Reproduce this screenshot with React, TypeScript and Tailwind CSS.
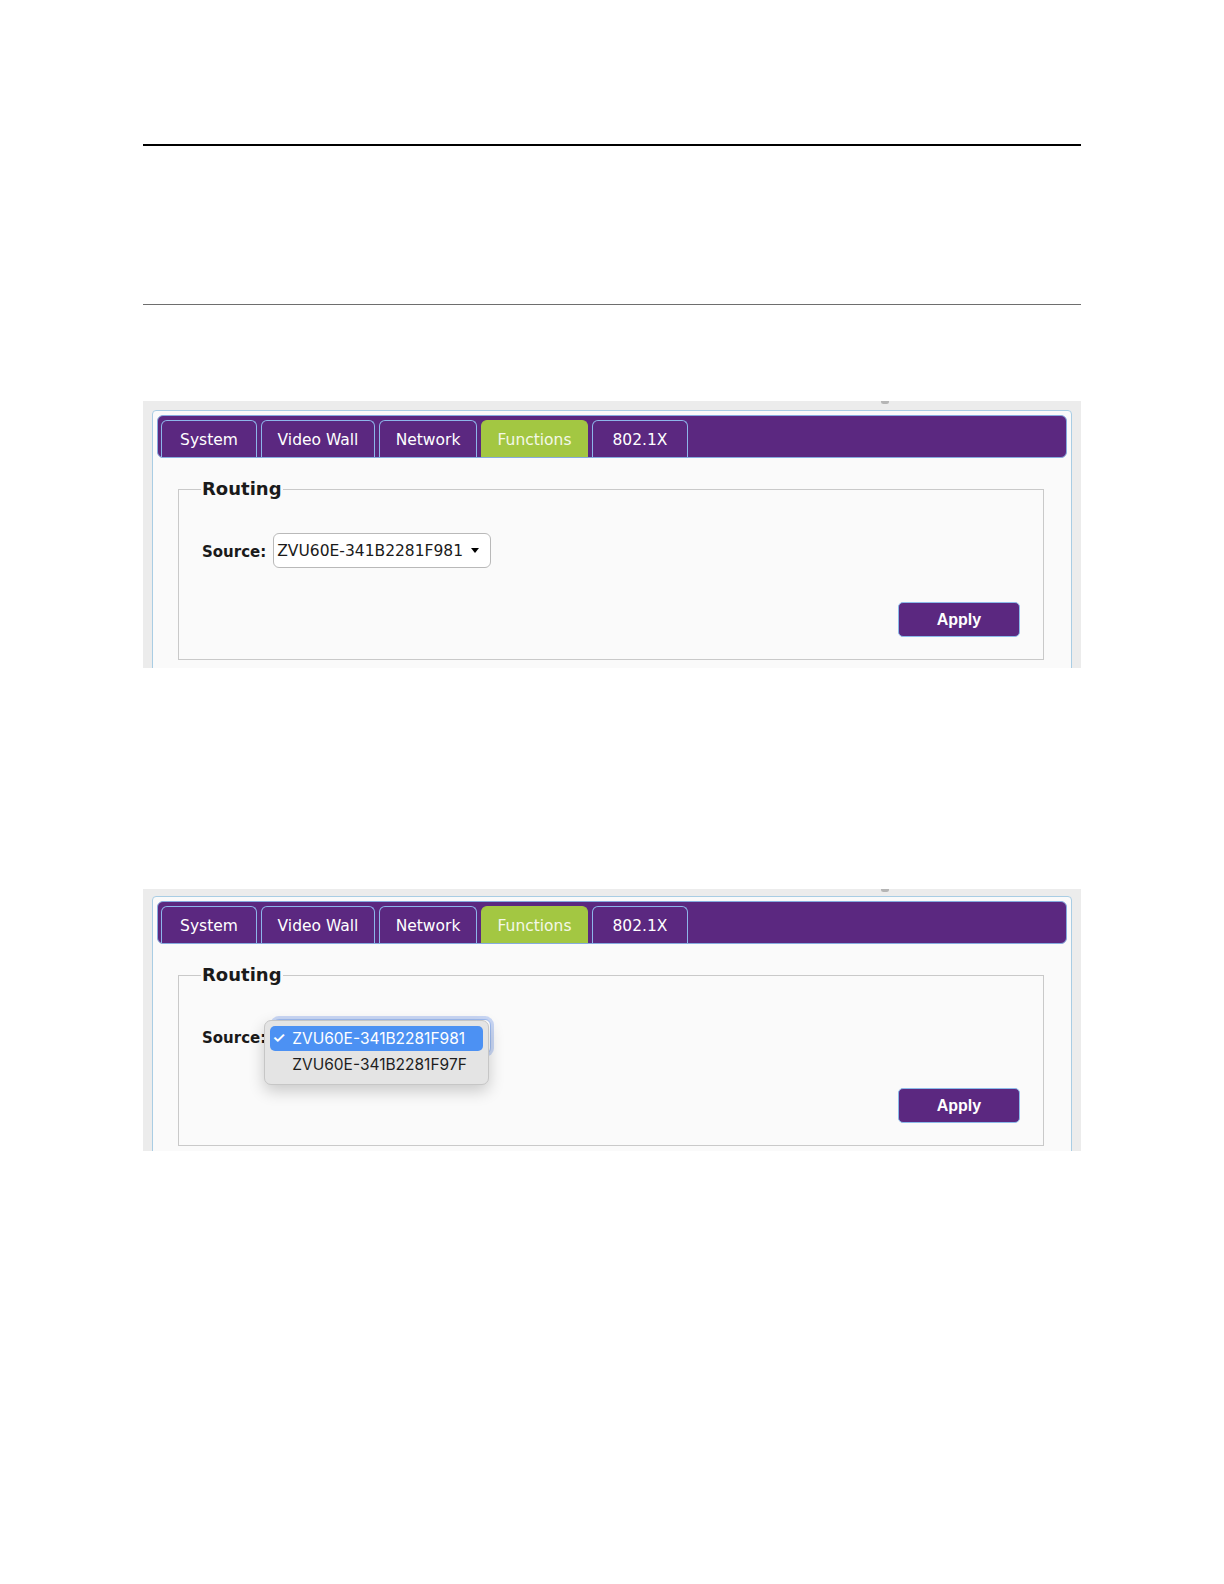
import React from 'react'

const tabs = [
  { label: 'System', width: 'w-[96px]' },
  { label: 'Video Wall', width: 'w-[114px]' },
  { label: 'Network', width: 'w-[98px]' },
  { label: 'Functions', width: 'w-[107px]', active: true },
  { label: '802.1X', width: 'w-[96px]' },
]

const SOURCE_A = 'ZVU60E-341B2281F981'
const SOURCE_B = 'ZVU60E-341B2281F97F'

function TabBar() {
  return (
    <div className="flex h-[43px] items-end gap-[4px] rounded-[6px] border border-[#86acdf] bg-[#5b2880] pl-[3px]">
      {tabs.map((tab) => (
        <div
          key={tab.label}
          className={
            tab.active
              ? `${tab.width} flex h-[37px] items-center justify-center rounded-t-[6px] border border-b-0 border-[#a3c742] bg-[#a3c742] pt-[3px] text-[15.5px] text-[#f4f8e8]`
              : `${tab.width} flex h-[37px] items-center justify-center rounded-t-[6px] border border-b-0 border-[#8db6ea] bg-[#5b2880] pt-[3px] text-[15.5px] text-white`
          }
        >
          {tab.label}
        </div>
      ))}
    </div>
  )
}

function SourceMenu() {
  return (
    <div className="absolute top-[1px] left-[-9px] z-10 w-[225px] rounded-[7px] border border-[#c6c6c6] bg-[#e4e4e4] px-[5px] pt-[5px] pb-[6px] font-['Inter',sans-serif] text-[15.5px] shadow-[0_6px_16px_rgba(0,0,0,0.2)]">
      <div className="flex h-[25px] items-center rounded-[5px] bg-[#4c91f3] pl-[2px] text-white">
        <span className="w-[20px] text-[15px] font-semibold">✓</span>
        <span>{SOURCE_A}</span>
      </div>
      <div className="flex h-[27px] items-center pl-[22px] text-[#1e1e1e]">{SOURCE_B}</div>
    </div>
  )
}

function Screenshot(props: { open?: boolean; frame: string }) {
  return (
    <div className={`relative ${props.frame} overflow-hidden bg-[#ececec] px-[9px] font-['DejaVu_Sans',sans-serif]`}>
      <div className="absolute top-[-2px] left-[738px] h-[5px] w-[8px] rounded-full bg-[#b5b5b5]" />
      <div className="h-[400px] rounded-t-[4px] border border-[#a9cde4] bg-[#fafafa] px-[4px] pt-[4px]">
        <TabBar />
        <fieldset className="mt-[20px] ml-[21px] mr-[23px] border border-[#c9c9c9] px-[23px] pb-[22px]">
          <legend className="ml-[-1px] px-[1px] text-[18px] leading-[22px] font-bold text-[#1a1a1a]">Routing</legend>
          <div className="flex items-center gap-[7px] pt-[33px]">
            <span className="pt-[3px] text-[15px] font-bold text-[#1a1a1a]">Source:</span>
            <div className="relative">
              {props.open ? (
                <div className="h-[35px] w-[218px] rounded-[6px] border border-[#9fbcf0] bg-white shadow-[0_0_0_3px_rgba(110,150,235,0.35)]" />
              ) : (
                <div className="flex h-[35px] w-[218px] items-center justify-between rounded-[6px] border border-[#b9b9b9] bg-white pr-[11px] pl-[3px] text-[15.5px] text-[#1a1a1a]">
                  <span className="pt-[3px]">{SOURCE_A}</span>
                  <span className="h-0 w-0 border-x-[4px] border-t-[5px] border-x-transparent border-t-black" />
                </div>
              )}
              {props.open && <SourceMenu />}
            </div>
          </div>
          <div className="mt-[34px] flex justify-end">
            <button className="h-[35px] w-[122px] rounded-[5px] border border-[#8cbbea] bg-[#5b2880] font-['Liberation_Sans',sans-serif] text-[16px] font-bold text-white">
              Apply
            </button>
          </div>
        </fieldset>
      </div>
    </div>
  )
}

export default function App() {
  return (
    <div className="min-h-[1584px] bg-white pt-[144px] pl-[143px]">
      <div className="w-[938px]">
        <div className="h-[2px] bg-black" />
        <div className="mt-[158px] h-px bg-[#6e6e6e]" />
        <div className="mt-[96px]">
          <Screenshot frame="h-[267px] pt-[9px]" />
        </div>
        <div className="mt-[221px]">
          <Screenshot open frame="h-[262px] pt-[7px]" />
        </div>
      </div>
    </div>
  )
}
